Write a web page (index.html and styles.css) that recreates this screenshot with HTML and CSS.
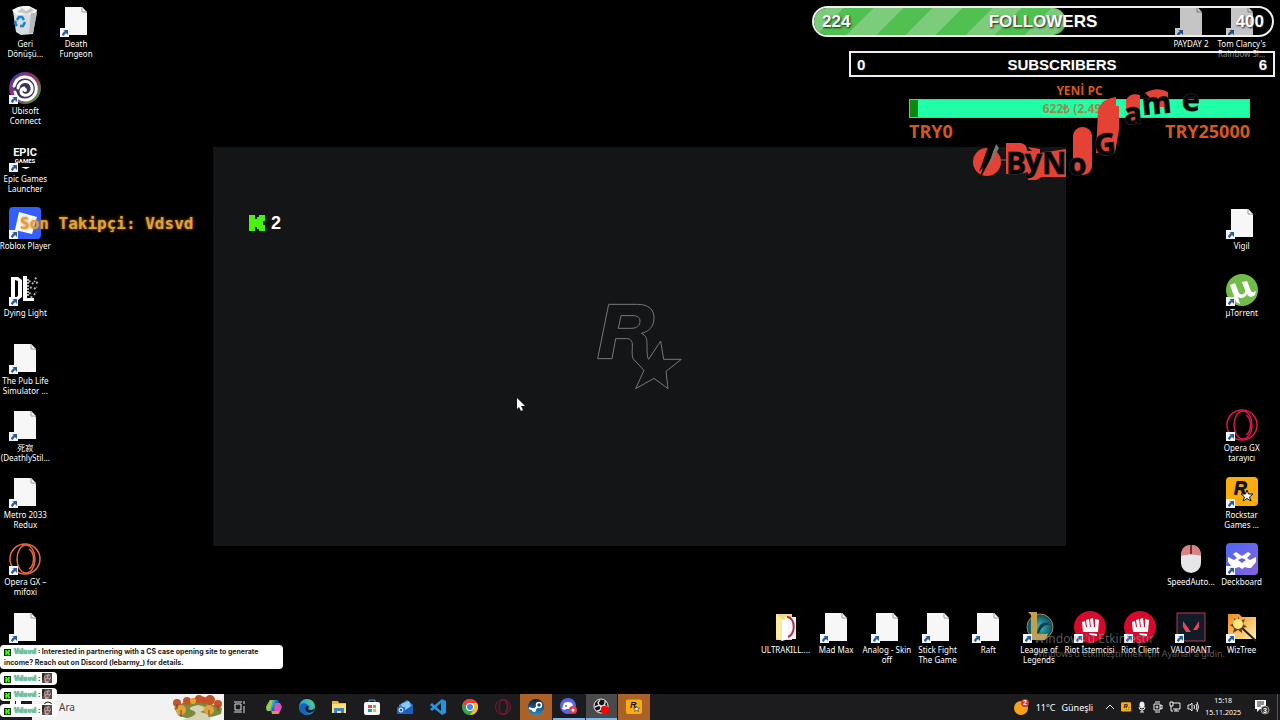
FILE: index.html
```html
<!DOCTYPE html>
<html lang="tr">

<head>
    <meta charset="UTF-8">
    <meta name="viewport" content="width=device-width, initial-scale=1.0">
    <title>Desktop</title>
    <link rel="stylesheet" href="styles.css">
</head>

<body>
    <!-- shared icons -->
    <svg class="defs" width="0" height="0">
        <defs>
            <linearGradient id="gUbi" x1="0" y1="0" x2="1" y2="1">
                <stop offset="0" stop-color="#2b3fc0" />
                <stop offset=".35" stop-color="#8a2f7c" />
                <stop offset=".6" stop-color="#8a4a50" />
                <stop offset="1" stop-color="#3fae4a" />
            </linearGradient>
            <linearGradient id="gDeck" x1="0" y1="0" x2="1" y2="1">
                <stop offset="0" stop-color="#4a68f0" />
                <stop offset="1" stop-color="#8a62dc" />
            </linearGradient>
            <linearGradient id="gWiz" x1="0" y1="0" x2="1" y2="1">
                <stop offset="0" stop-color="#ef8a1c" />
                <stop offset="1" stop-color="#fff0a8" />
            </linearGradient>
            <linearGradient id="gEdge" x1="0" y1="1" x2="1" y2="0">
                <stop offset="0" stop-color="#0c5fc0" />
                <stop offset=".5" stop-color="#27a5e0" />
                <stop offset="1" stop-color="#6ddc5a" />
            </linearGradient>
            <linearGradient id="gSteam" x1="0" y1="0" x2="0" y2="1">
                <stop offset="0" stop-color="#0f1c3c" />
                <stop offset="1" stop-color="#1f8fd0" />
            </linearGradient>
            <radialGradient id="gLol">
                <stop offset="0" stop-color="#38c0c0" />
                <stop offset="1" stop-color="#0a4658" />
            </radialGradient>
            <symbol id="arrow" viewBox="0 0 32 32">
                <rect x="0" y="23" width="9" height="9" fill="#f4f8fc" />
                <path d="M3 25h5v5l-2-2c-1 1-2 2-2 3l-2-1c0-1 1-3 3-4z" fill="#2a5a9c" />
            </symbol>
            <symbol id="doc" viewBox="0 0 32 32">
                <path d="M5 2h17l5 6v22H5z" fill="#f7f7f7" />
                <path d="M22 2v5h5" fill="#fff" stroke="#9a9a9a" />
                <use href="#arrow" />
            </symbol>
            <symbol id="rockstar" viewBox="0 0 32 32">
                <rect y="1" width="32" height="29" rx="4" fill="#fbad10" />
                <text x="8" y="18" class="letter-r">R</text>
                <path d="M21 14l1.500 4H27l-3.500 3 1.500 4-4-2.500-4 2.500 1.500-4-3.500-3h4.500z" fill="#fff" stroke="#111" />
            </symbol>
            <symbol id="riot" viewBox="0 0 32 32">
                <circle cx="16" cy="16" r="16" fill="#d50a2c" />
                <path d="M8 11l3-1 1 6h1l-1-7 3-1 1 8h1l-1-8 3-1 1 9h1V8l4 1-1 12H9z" fill="#fff" />
                <path d="M15 22l8 1v2l-7-1z" fill="#fff" />
            </symbol>
            <symbol id="opera" viewBox="0 0 32 32">
                <g fill="none" stroke="currentColor" stroke-width="1.500">
                    <circle cx="16" cy="16" r="15" />
                    <ellipse cx="17" cy="16" rx="9" ry="14" />
                    <path d="M20 6c6 4 6 16 0 20" />
                </g>
            </symbol>
            <symbol id="kick" viewBox="0 0 16 16">
                <path d="M0 0h6v4h2V2h2V0h6v6h-2v4h2v6h-6v-2H8v-2H6v4H0z" fill="#48f312" />
            </symbol>
            <symbol id="kickbox" viewBox="0 0 16 16">
                <rect width="16" height="16" fill="#0a2b05" />
                <path d="M3 2h4v3h2V2h5v4h-2v4h2v4H9v-3H7v3H3z" fill="#48f312" />
            </symbol>
            <symbol id="emote" viewBox="0 0 10 10">
                <rect width="10" height="10" fill="#5b4d4e" />
                <path d="M2 3l5-2 2 4-3 5H3z" fill="#bc9c94" />
                <path d="M3 4h2M6 4h2M4 7h3" stroke="#342b2d" />
                <path d="M0 0h3L1 7H0z" fill="#2d292c" />
            </symbol>
        </defs>
    </svg>

    <main class="desktop">
        <div class="icons">
            <button class="shortcut col-1 row-1">
                <svg class="icon" viewBox="0 0 32 32">
                    <path d="M4 6l24-1-4 24-12 1-5-3z" fill="#d9dcdf" />
                    <path d="M3 5l6-3 5-1 6 0 8 4-3 4-18 1z" fill="#f5f5f5" />
                    <path d="M8 7l5-4 4 3 5-3 3 3-7 3z" fill="#c4c8cb" />
                    <path d="M22 8l-2 21 4-1 4-20z" fill="#b5b9bd" />
                    <path d="M8 15l2-3h3l2 3M16 17l-2 4h-3M8 21l-2-3 1-2" fill="none" stroke="#1784d0" stroke-width="2.500" />
                </svg>
                <span>Geri<br>Dönüşü...</span>
            </button>
            <button class="shortcut col-1 row-2">
                <svg class="icon" viewBox="0 0 32 32">
                    <circle cx="16" cy="16" r="16" fill="url(#gUbi)" />
                    <circle cx="16" cy="17" r="11" fill="#3a3560" />
                    <g fill="none" stroke="#fff" stroke-linecap="round">
                        <path d="M5 14C8 3 21 2 26 11c4 9-2 17-10 17-6 0-9-4-10-8" stroke-width="3" />
                        <path d="M9 16c1-8 12-9 14-1 1 6-4 9-8 8-4-1-4-6 0-7" stroke-width="3" />
                    </g>
                    <circle cx="16" cy="18" r="2" fill="#fff" />
                    <use href="#arrow" />
                </svg>
                <span>Ubisoft<br>Connect</span>
            </button>
            <button class="shortcut col-1 row-3">
                <svg class="icon" viewBox="0 0 32 32">
                    <text x="16" y="16" class="epic-top">EPIC</text>
                    <text x="16" y="23" class="epic-bottom">GAMES</text>
                    <path d="M12 27h9l-4 2z" fill="#fff" />
                    <use href="#arrow" />
                </svg>
                <span>Epic Games<br>Launcher</span>
            </button>
            <button class="shortcut col-1 row-4">
                <svg class="icon" viewBox="0 0 32 32">
                    <rect width="32" height="32" rx="4" fill="#335fff" />
                    <path d="M10 5l18 5-5 17-17-4z" fill="#fff" />
                    <use href="#arrow" />
                </svg>
                <span>Roblox Player</span>
            </button>
            <button class="shortcut col-1 row-5">
                <svg class="icon" viewBox="0 0 32 32">
                    <path d="M2 3h7l4 3v17l-4 3H2zM6 6v17h2l1-2V7z" fill="#fff" fill-rule="evenodd" />
                    <path d="M14 2h4v22h7v3H14z" fill="#fff" />
                    <path d="M20 8l2-2M23 10l3-3M26 5l2-2M21 14l2-1M25 15l3-2M20 19l3 1M25 21l2-3M22 24l1-2M27 9l2-1M19 5v18" fill="none" stroke="#aaa" stroke-width="2" stroke-dasharray="2 1" />
                    <use href="#arrow" />
                </svg>
                <span>Dying Light</span>
            </button>
            <button class="shortcut col-1 row-6">
                <svg class="icon"><use href="#doc" /></svg>
                <span>The Pub Life<br>Simulator ...</span>
            </button>
            <button class="shortcut col-1 row-7">
                <svg class="icon"><use href="#doc" /></svg>
                <span>死寂<br>(DeathlyStil...</span>
            </button>
            <button class="shortcut col-1 row-8">
                <svg class="icon"><use href="#doc" /></svg>
                <span>Metro 2033<br>Redux</span>
            </button>
            <button class="shortcut col-1 row-9">
                <svg class="icon orange"><use href="#opera" /><use href="#arrow" /></svg>
                <span>Opera GX –<br>mifoxi</span>
            </button>
            <button class="shortcut col-1 row-10" aria-label="Shortcut">
                <svg class="icon"><use href="#doc" /></svg>
            </button>
            <button class="shortcut col-2 row-1">
                <svg class="icon"><use href="#doc" /></svg>
                <span>Death<br>Fungeon</span>
            </button>

            <button class="shortcut col-24 row-1">
                <svg class="icon"><use href="#doc" /></svg>
                <span>PAYDAY 2</span>
            </button>
            <button class="shortcut col-25 row-1">
                <svg class="icon"><use href="#doc" /></svg>
                <span>Tom Clancy's<br>Rainbow Si...</span>
            </button>
            <button class="shortcut col-25 row-4">
                <svg class="icon"><use href="#doc" /></svg>
                <span>Vigil</span>
            </button>
            <button class="shortcut col-25 row-5">
                <svg class="icon" viewBox="0 0 32 32">
                    <circle cx="16" cy="16" r="16" fill="#72bd4a" />
                    <path d="M4 11l5-2 4 10c2 3 7 1 6-3l-3-8 5-1 4 10c1 2 3 1 5 0l-1 4c-4 3-7 2-8-1-2 4-6 5-9 3l2 7-4-2z" fill="#fff" />
                    <use href="#arrow" />
                </svg>
                <span>µTorrent</span>
            </button>
            <button class="shortcut col-25 row-7">
                <svg class="icon pink"><use href="#opera" /><use href="#arrow" /></svg>
                <span>Opera GX<br>tarayıcı</span>
            </button>
            <button class="shortcut col-25 row-8">
                <svg class="icon"><use href="#rockstar" /><use href="#arrow" /></svg>
                <span>Rockstar<br>Games ...</span>
            </button>
            <button class="shortcut col-24 row-9">
                <svg class="icon" viewBox="0 0 32 32">
                    <rect x="6" y="2" width="20" height="28" rx="10" fill="#e6e6e8" />
                    <path d="M6 13C6 5 10 2 16 2s10 3 10 11c-7-2-13-2-20 0z" fill="#d88484" />
                    <path d="M16 2v9" stroke="#7a2a30" stroke-width="2" />
                </svg>
                <span>SpeedAuto...</span>
            </button>
            <button class="shortcut col-25 row-9">
                <svg class="icon" viewBox="0 0 32 32">
                    <rect width="32" height="32" rx="4" fill="url(#gDeck)" />
                    <path d="M10 9l6 4 6-4 3 2-4 4 3 2 6-3v5l-5 6h-3l-3-1-3 2-3-2-3 1H7l-5-6v-5l6 3 3-2-4-4z" fill="#fff" />
                    <path d="M16 15l4 2-4 3-4-3z" fill="#6765e6" />
                    <use href="#arrow" />
                </svg>
                <span>Deckboard</span>
            </button>

            <button class="shortcut col-16 row-10">
                <svg class="icon" viewBox="0 0 32 32">
                    <path d="M6 3h16v26H6z" fill="#f2d98a" />
                    <path d="M15 6h11v22H15z" fill="#f6f6f6" />
                    <path d="M17 6c9 0 9 19 0 20" fill="none" stroke="#b82a50" stroke-width="2" />
                    <path d="M12 9l6-2v21l-6 2z" fill="#fff" />
                    <path d="M6 3l6 5v22l-6-3z" fill="#ffeaa0" />
                </svg>
                <span>ULTRAKILL....</span>
            </button>
            <button class="shortcut col-17 row-10">
                <svg class="icon"><use href="#doc" /></svg>
                <span>Mad Max</span>
            </button>
            <button class="shortcut col-18 row-10">
                <svg class="icon"><use href="#doc" /></svg>
                <span>Analog - Skin<br>off</span>
            </button>
            <button class="shortcut col-19 row-10">
                <svg class="icon"><use href="#doc" /></svg>
                <span>Stick Fight<br>The Game</span>
            </button>
            <button class="shortcut col-20 row-10">
                <svg class="icon"><use href="#doc" /></svg>
                <span>Raft</span>
            </button>
            <button class="shortcut col-21 row-10">
                <svg class="icon" viewBox="0 0 32 32">
                    <circle cx="17" cy="16" r="13" fill="url(#gLol)" stroke="#a58a48" />
                    <path d="M14 22c2-11 8-13 14-8-5-1-9 1-12 8z" fill="#0b3c50" />
                    <path d="M5 1h9v22h11l-3 6H5l3-3V4z" fill="#c2a052" />
                    <use href="#arrow" />
                </svg>
                <span>League of<br>Legends</span>
            </button>
            <button class="shortcut col-22 row-10">
                <svg class="icon"><use href="#riot" /><use href="#arrow" /></svg>
                <span>Riot İstemcisi</span>
            </button>
            <button class="shortcut col-23 row-10">
                <svg class="icon"><use href="#riot" /><use href="#arrow" /></svg>
                <span>Riot Client</span>
            </button>
            <button class="shortcut col-24 row-10">
                <svg class="icon" viewBox="0 0 32 32">
                    <rect x="2" y="2" width="28" height="28" fill="#101c26" stroke="#b8385a" />
                    <path d="M8 10l8 11h-5l-3-5zM24 10v6l-2 3h-4z" fill="#e84560" />
                    <use href="#arrow" />
                </svg>
                <span>VALORANT</span>
            </button>
            <button class="shortcut col-25 row-10">
                <svg class="icon" viewBox="0 0 32 32">
                    <path d="M2 3h11l3 3h14v22H2z" fill="url(#gWiz)" />
                    <path d="M15 16l15 14" stroke="#222" stroke-width="2" />
                    <path d="M12 5l2 5 5-2-2 5 4 3-5 1v5l-4-3-5 3 1-5-4-3 5-2-1-5 4 3z" fill="#6d4310" />
                    <circle cx="12" cy="13" r="5" fill="#ffe680" />
                    <use href="#arrow" />
                </svg>
                <span>WizTree</span>
            </button>
        </div>

        <section class="launcher">
            <svg width="120" height="110" viewBox="0 0 360 330" fill="none" stroke="#777" stroke-width="3">
                <path d="M86 43h86c34 0 50 16 50 40 0 28-16 42-38 47 14 6 17 16 17 32 0 22 0 40 5 46l36-55 9 55h53l-46 36 6 52-42-31-55 31 25-55-33-35c-5-14-1-30-2-44-2-12-6-16-17-16h-33l-11 60H53z" />
                <path d="M123 77l-8 38h37c20 0 28-8 28-22 0-10-8-16-20-16z" />
            </svg>
        </section>

        <div class="viewers">
            <svg width="16" height="16"><use href="#kick" /></svg>
            <span>2</span>
        </div>

        <p class="last-follower">Son Takipçi: Vdsvd</p>

        <section class="goals">
            <div class="goal followers">
                <div class="goal-fill"></div>
                <span>224</span><span class="goal-name">FOLLOWERS</span><span>400</span>
            </div>
            <div class="goal subscribers">
                <span>0</span><span class="goal-name">SUBSCRIBERS</span><span>6</span>
            </div>
            <div class="tip">
                <div class="tip-title">YENİ PC</div>
                <div class="tip-bar">622₺ (2.49%)</div>
                <div class="tip-range"><span>TRY0</span><span>TRY25000</span></div>
            </div>
        </section>

        <svg class="bynogame" width="250" height="110" viewBox="0 0 250 110">
            <g fill="#e34234">
                <circle cx="27" cy="82" r="14" />
                <path d="M46 63h15q6 1 6 8h5l-4-4 12 2v4l26-4v28H82l-6 3h-8v-8l-8 2H46z" />
                <rect x="113" y="47" width="19" height="48" rx="9" />
                <path d="M138 31q2-12 18-14v9h3v24l-4 23h-19z" />
                <path d="M166 20q4-8 14-5v26h-8l-6-12zM185 13q12-7 23-1v15h-8z" />
            </g>
            <path d="M19 92l9-25 8-4-5 15-12 23 4-14z" fill="#050505" />
            <path d="M36 64l-9 26 12-22z" fill="#777" />
            <path d="M40 80h7" stroke="#777" />
            <g class="logo-letters">
                <text x="46" y="94">B</text>
                <text x="65" y="91">y</text>
                <text x="82" y="94">N</text>
                <text x="108" y="95">o</text>
                <text x="134" y="75" transform="rotate(-5 145 65)">G</text>
                <text x="164" y="44" transform="rotate(-5 172 35)">a</text>
                <text x="182" y="34" transform="rotate(-5 195 25)">m</text>
                <text x="222" y="31">e</text>
            </g>
        </svg>

        <div class="watermark">
            <div class="watermark-title">Windows'u Etkinleştir</div>
            <div>Windows'u etkinleştirmek için Ayarlar'a gidin.</div>
        </div>

        <svg class="cursor" width="8" height="13" viewBox="0 0 8 13">
            <path d="M0 0v11l2-2 2 4 2-1-2-4h4z" fill="#fff" />
        </svg>
    </main>

    <footer class="taskbar">
        <button class="start" aria-label="Start">
            <svg width="12" height="12" viewBox="0 0 12 12"><path d="M0 0h5v5H0zM6 0h5v5H6zM0 6h5v5H0zM6 6h5v5H6z" fill="#fff" /></svg>
        </button>
        <label class="search">
            <svg width="12" height="12" viewBox="0 0 12 12" fill="none" stroke="#222"><circle cx="7" cy="5" r="4" /><path d="M4 8l-4 4" /></svg>
            <input type="text" placeholder="Ara" aria-label="Ara">
            <svg width="52" height="26" viewBox="0 0 52 26">
                <path d="M2 14q12-9 24-7t24 7l-1 6q-24 9-42 2z" fill="#7a8c3c" />
                <path d="M10 26q18-5 12-9-10-3 4-6 14 3 2 7 14 3 10 8z" fill="#d6d3b4" />
                <g fill="#c5532a">
                    <circle cx="5" cy="9" r="4" /><circle cx="15" cy="7" r="4" /><circle cx="27" cy="5" r="4" />
                    <circle cx="38" cy="6" r="5" /><circle cx="46" cy="10" r="4" /><path d="M18 6q14-8 22 2l-8 2z" />
                </g>
                <g fill="#e3a138">
                    <circle cx="9" cy="16" r="5" /><circle cx="37" cy="16" r="5" /><circle cx="21" cy="7" r="3" />
                </g>
                <path d="M9 16v7M37 16v7M5 10v5M46 11v6" stroke="#6d4524" />
            </svg>
        </label>
        <button class="task-view" aria-label="Task view">
            <svg width="12" height="12" viewBox="0 0 12 12" fill="none" stroke="#ddd"><path d="M0 1h8M0 11h8M1 3h6v6H1zM10 0v3M10 5v7" /></svg>
        </button>
        <nav class="apps">
            <button aria-label="Copilot">
                <svg width="16" height="16" viewBox="0 0 16 16"><path d="M4 1h6l2 3-5 8H1l-1-4z" fill="#2ba7de" /><path d="M4 1h3L4 12H1l-1-4z" fill="#a0c944" /><path d="M9 4h5l2 4-3 7H6l-1-3h3z" fill="#d755b7" /><path d="M6 12h7l-1 3H6z" fill="#f08a44" /><path d="M10 1h2l1 3H9l-2 8H5z" fill="#2361cc" /></svg>
            </button>
            <button aria-label="Edge">
                <svg width="16" height="16" viewBox="0 0 16 16"><circle cx="8" cy="8" r="8" fill="url(#gEdge)" /><path d="M6 9c0-3 4-3 4-1l-1 2c2 2 5 1 7-1-2 7-10 6-10 0z" fill="#1c1c1e" /><path d="M0 9c1-6 8-6 9-2-4 0-4 6 1 8-5 2-10-2-10-6z" fill="#1066bf" /></svg>
            </button>
            <button aria-label="File Explorer">
                <svg width="16" height="16" viewBox="0 0 16 16"><path d="M1 2h6l1 2h7v10H1z" fill="#f2b92f" /><path d="M1 5h14v9H1z" fill="#ffdf76" /><path d="M3 9h10v5h-3v-2H6v2H3z" fill="#3d86c6" /></svg>
            </button>
            <button aria-label="Store">
                <svg width="16" height="16" viewBox="0 0 16 16"><path d="M5 4V1h6v3" fill="none" stroke="#48a5dc" /><rect y="3" width="16" height="13" rx="2" fill="#f7f7f7" /><path d="M4 6h4v3H4z" fill="#e64a30" /><path d="M9 6h3v3H9z" fill="#74b62e" /><path d="M4 10h4v3H4z" fill="#2390d0" /><path d="M9 10h3v3H9z" fill="#f0b92a" /></svg>
            </button>
            <button aria-label="Outlook">
                <svg width="16" height="16" viewBox="0 0 16 16"><path d="M2 6l8-5 6 5v9H2z" fill="#2c8ce0" /><path d="M4 5l8-3 2 6-7 4z" fill="#8bc8f4" /><path d="M2 15l14-9v9z" fill="#185fb9" /><rect y="8" width="8" height="7" rx="1" fill="#1b69c4" /><circle cx="4" cy="11" r="2" fill="none" stroke="#fff" /></svg>
            </button>
            <button aria-label="VS Code">
                <svg width="16" height="16" viewBox="0 0 16 16"><path d="M12 0l4 2v12l-4 2-12-10 2-2 9 8V4L2 12l-2-2z" fill="#2394dc" /></svg>
            </button>
            <button aria-label="Chrome">
                <svg width="16" height="16" viewBox="0 0 16 16"><circle cx="8" cy="8" r="8" fill="#37a852" /><path d="M1 4a8 8 0 0 1 14 0H8L5 10z" fill="#ea4335" /><path d="M15 4a8 8 0 0 1-7 12l4-6-2-6z" fill="#fbc016" /><circle cx="8" cy="8" r="4" fill="#fff" /><circle cx="8" cy="8" r="3" fill="#4285f4" /></svg>
            </button>
            <button aria-label="Opera GX"><svg class="wine" width="16" height="16"><use href="#opera" /></svg></button>
            <button class="attention" aria-label="Steam">
                <svg width="16" height="16" viewBox="0 0 16 16"><circle cx="8" cy="8" r="8" fill="url(#gSteam)" /><circle cx="11" cy="6" r="2.500" fill="none" stroke="#fff" stroke-width="1.500" /><path d="M1 9l5 2 3-3" stroke="#fff" stroke-width="2" fill="none" /><circle cx="6" cy="11" r="2" fill="#fff" /></svg>
            </button>
            <button class="open" aria-label="Discord">
                <svg width="18" height="16" viewBox="0 0 18 16"><circle cx="8" cy="8" r="8" fill="#5865e8" /><path d="M4 5q4-2 8 0l2 6-3 1-1-1H6l-1 1-3-1z" fill="#fff" /><circle cx="6" cy="8" r="1" fill="#5865e8" /><circle cx="13" cy="12" r="4" fill="#dc4052" /><circle cx="13" cy="12" r="1.500" fill="#fff" /></svg>
            </button>
            <button class="open active" aria-label="OBS">
                <svg width="16" height="16" viewBox="0 0 16 16"><circle cx="8" cy="8" r="7" fill="#111" stroke="#eee" /><path d="M7 2q-4 4 1 6 5 0 4-5M2 9q5-3 6 0 0 4-4 4M14 9q-4-3-6 0" fill="none" stroke="#ddd" stroke-width="1.500" /><circle cx="12" cy="12" r="4" fill="#f00" /></svg>
            </button>
            <button class="attention" aria-label="Rockstar"><svg width="16" height="16"><use href="#rockstar" /></svg></button>
        </nav>
        <div class="tray">
            <button class="weather">
                <svg width="16" height="16" viewBox="0 0 16 16"><circle cx="7" cy="9" r="7" fill="#f8a21c" /><circle cx="11" cy="4" r="4" fill="#d63434" /><text x="9" y="6" class="tiny">2</text></svg>
                <span>11°C</span><span>Güneşli</span>
            </button>
            <button aria-label="Hidden icons"><svg width="10" height="10" viewBox="0 0 10 10" fill="none" stroke="#eee"><path d="M1 7l4-4 4 4" /></svg></button>
            <button aria-label="Rockstar"><svg width="10" height="10"><use href="#rockstar" /></svg></button>
            <button aria-label="Microphone"><svg width="10" height="12" viewBox="0 0 10 12" stroke="#eee" fill="none"><rect x="3" y="1" width="4" height="6" rx="2" fill="#eee" /><path d="M2 6q0 3 3 3t3-3M5 9v2M3 11h4" /></svg></button>
            <button aria-label="Meet now"><svg width="10" height="12" viewBox="0 0 10 12" stroke="#eee" fill="none"><path d="M2 1h5M2 11h5M1 3h6v6H1zM7 5l2-1v4l-2-1" /><circle cx="4" cy="6" r="1" /></svg></button>
            <button aria-label="Network"><svg width="12" height="12" viewBox="0 0 12 12" stroke="#eee" fill="none"><path d="M4 2h7v6H4M5 10h5M7 8v2M1 1h3v4H1zM2 5v5h2" /></svg></button>
            <button aria-label="Volume"><svg width="12" height="10" viewBox="0 0 12 10" stroke="#eee" fill="none"><path d="M1 3h2l2-2v8L3 7H1zM7 3q1 2 0 4M9 2q2 3 0 6M10 0q3 5 0 10" /></svg></button>
            <button class="clock"><span>15:18</span><span>15.11.2025</span></button>
            <button class="notifications" aria-label="Notifications">
                <svg width="16" height="16" viewBox="0 0 16 16"><path d="M1 1h11v9H6l-3 3v-3H1z" fill="#fff" /><path d="M3 3h7M3 5h7M3 7h4" stroke="#222" /><circle cx="11" cy="11" r="4" fill="#333" stroke="#999" /><text x="9" y="14" class="tiny">3</text></svg>
            </button>
        </div>
    </footer>

    <aside class="chat">
        <p><svg><use href="#kickbox" /></svg> <b class="name">Vdsvd</b> : Interested in partnering with a CS case opening site to generate income? Reach out on Discord (lebarmy_) for details.</p>
        <p><svg><use href="#kickbox" /></svg> <b class="name">Vdsvd</b> : <svg class="emote"><use href="#emote" /></svg></p>
        <p><svg><use href="#kickbox" /></svg> <b class="name">Vdsvd</b> : <svg class="emote"><use href="#emote" /></svg></p>
        <p><svg><use href="#kickbox" /></svg> <b class="name">Vdsvd</b> : <svg class="emote"><use href="#emote" /></svg></p>
    </aside>
</body>

</html>
```
FILE: styles.css
```css
* {
    box-sizing: border-box;
}

body {
    margin: 0;
    height: 100vh;
    display: flex;
    flex-direction: column;
    overflow: hidden;
    background: #000;
    color: #fff;
    font-family: "Noto Sans", "Noto Sans CJK SC", sans-serif;
    font-size: 8px;
}

p {
    margin: 0;
}

button {
    padding: 0;
    border: 0;
    background: none;
    color: inherit;
    font: inherit;
}

.defs {
    position: absolute;
}

/* desktop */
.desktop {
    position: relative;
    flex: 1;
    min-height: 0;
}

.icons {
    height: 100%;
    display: grid;
    grid-template-columns: repeat(25, minmax(0, 1fr));
    grid-template-rows: repeat(10, minmax(0, 1fr));
    padding: 0 13px 21px 0;
}

.shortcut {
    display: flex;
    flex-direction: column;
    align-items: center;
    gap: 2px;
    padding-top: 5px;
    line-height: 10px;
    text-align: center;
    white-space: nowrap;
    text-shadow: 0 1px 1px #000;
}

.icon {
    width: 32px;
    height: 32px;
    flex: none;
}

.orange { color: #e8683c; }
.pink { color: #e0144c; }
.wine { color: #a01440; }

.col-1 { grid-column: 1; }
.col-2 { grid-column: 2; }
.col-16 { grid-column: 16; }
.col-17 { grid-column: 17; }
.col-18 { grid-column: 18; }
.col-19 { grid-column: 19; }
.col-20 { grid-column: 20; }
.col-21 { grid-column: 21; }
.col-22 { grid-column: 22; }
.col-23 { grid-column: 23; }
.col-24 { grid-column: 24; }
.col-25 { grid-column: 25; }

.row-1 { grid-row: 1; }
.row-2 { grid-row: 2; }
.row-3 { grid-row: 3; }
.row-4 { grid-row: 4; }
.row-5 { grid-row: 5; }
.row-6 { grid-row: 6; }
.row-7 { grid-row: 7; }
.row-8 { grid-row: 8; }
.row-9 { grid-row: 9; }
.row-10 { grid-row: 10; }

.letter-r {
    font: italic bold 18px "Liberation Sans", sans-serif;
    fill: #111;
}

.epic-top,
.epic-bottom {
    font: bold 11px Roboto, sans-serif;
    fill: #fff;
    text-anchor: middle;
}

.epic-bottom {
    font-size: 6px;
}

.tiny {
    font: bold 7px "Liberation Sans", sans-serif;
    fill: #fff;
}

.launcher {
    position: absolute;
    top: 147px;
    left: 213px;
    right: 214px;
    bottom: 148px;
    display: flex;
    align-items: center;
    justify-content: center;
    padding-bottom: 4px;
    background: #131517;
}

.viewers {
    position: absolute;
    top: 213px;
    left: 249px;
    display: flex;
    align-items: center;
    gap: 6px;
    font: bold 18px/20px "Liberation Sans", sans-serif;
}

.last-follower {
    position: absolute;
    top: 214px;
    left: 20px;
    color: #e0a23c;
    font: bold 16px/20px "DejaVu Sans Mono", monospace;
    text-shadow: 0 0 3px #c07818;
}

/* stream goals */
.goals {
    position: absolute;
    top: 6px;
    right: 5px;
    display: flex;
    flex-direction: column;
    align-items: flex-end;
    font-family: "Liberation Sans", sans-serif;
    font-weight: bold;
}

.goal {
    position: relative;
    display: flex;
    align-items: center;
    justify-content: space-between;
    border: 2px solid #eee;
    background: rgb(0 0 0 / 0.2);
    text-shadow: 1px 1px 2px #222;
}

.goal span {
    position: relative;
}

.goal .goal-name {
    position: absolute;
    left: 0;
    right: 0;
    text-align: center;
}

.followers {
    width: 462px;
    height: 31px;
    margin-right: 1px;
    padding: 0 8px;
    border-radius: 16px;
    font-size: 17px;
}

.goal-fill {
    position: absolute;
    top: 0;
    left: 0;
    bottom: 0;
    width: 55%;
    border-radius: 14px;
    background: repeating-linear-gradient(135deg, #7ccc7c 0 21px, #50c050 21px 42px);
}

.subscribers {
    width: 426px;
    height: 26px;
    margin-top: 14px;
    padding: 0 6px;
    background: rgb(0 0 0 / 0.5);
    font-size: 15px;
}

.tip {
    width: 341px;
    margin: 6px 25px 0 0;
    color: #d4581c;
    font-family: "Open Sans", sans-serif;
    text-align: center;
}

.tip-title {
    font-size: 12px;
    line-height: 16px;
}

.tip-bar {
    height: 19px;
    border: 1px solid #40d890;
    background: linear-gradient(90deg, #0a8a0a 8px, #20ffa8 8px);
    color: #a08848;
    font-size: 12px;
    line-height: 17px;
}

.tip-range {
    display: flex;
    justify-content: space-between;
    font-size: 18px;
    line-height: 26px;
}

.bynogame {
    position: absolute;
    top: 80px;
    left: 960px;
}

.logo-letters {
    font: bold 30px "Open Sans", sans-serif;
    fill: #050505;
    stroke: #333;
    stroke-width: 1px;
    paint-order: stroke;
}

.watermark {
    position: absolute;
    right: 55px;
    bottom: 33px;
    color: rgb(160 160 160 / 0.55);
    font-size: 9px;
    line-height: 14px;
}

.watermark-title {
    font-size: 12px;
    line-height: 16px;
}

.cursor {
    position: absolute;
    top: 398px;
    left: 517px;
}

/* chat overlay */
.chat {
    position: absolute;
    left: 0;
    bottom: 3px;
    display: flex;
    flex-direction: column;
    align-items: flex-start;
    gap: 3px;
    color: #222;
    font: bold 7px/11px Inter, sans-serif;
}

.chat p {
    max-width: 283px;
    padding: 1px 4px;
    border-radius: 4px;
    background: #fff;
}

.chat svg {
    width: 7px;
    height: 7px;
    margin-right: 1px;
    vertical-align: middle;
}

.chat .emote {
    width: 10px;
    height: 10px;
    vertical-align: top;
}

.name {
    color: #74c8a8;
    text-shadow: 0 0 1px #208060;
}

/* taskbar */
.taskbar {
    height: 26px;
    flex: none;
    display: flex;
    background: #1c1c1e;
}

.taskbar button {
    display: flex;
    align-items: center;
    justify-content: center;
}

.start {
    width: 32px;
}

.search {
    width: 192px;
    display: flex;
    align-items: center;
    padding-left: 9px;
    background: #f2f2f2;
}

.search input {
    flex: 1;
    min-width: 0;
    padding: 0 6px;
    border: 0;
    background: none;
    font: 10px "Noto Sans", sans-serif;
}

.search input::placeholder {
    color: #444;
}

.task-view {
    width: 32px;
}

.apps {
    width: 392px;
    display: grid;
    grid-template-columns: repeat(12, 1fr);
    column-gap: 1px;
    margin-left: 2px;
}

.apps .attention {
    background: #ab6228;
}

.apps .open {
    border-bottom: 2px solid #78b8ec;
}

.apps .active {
    background: #4a4a4c;
}

.tray {
    margin-left: auto;
    display: flex;
    gap: 6px;
    padding-right: 2px;
}

.weather {
    gap: 6px;
    margin-right: 6px;
    font-size: 9px;
}

.tray .clock {
    flex-direction: column;
    font-size: 7px;
    line-height: 12px;
}

.tray .notifications {
    width: 31px;
    border-right: 1px solid #555;
}
```
